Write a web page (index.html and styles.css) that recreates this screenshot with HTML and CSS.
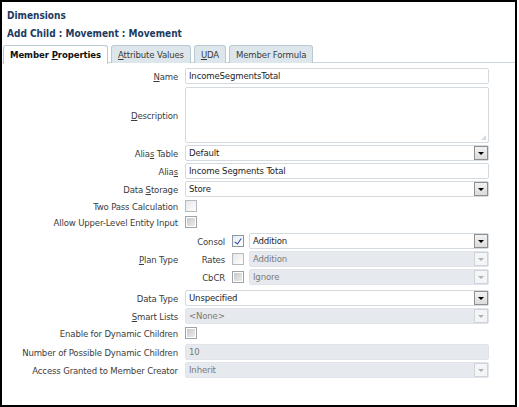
FILE: index.html
```html
<!DOCTYPE html>
<html>
<head>
<meta charset="utf-8">
<link rel="stylesheet" href="styles.css">
</head>
<body>
<div class="frame">
  <div class="hdr">
    <div class="title">Dimensions</div>
    <div class="title sub">Add Child : Movement : Movement</div>
  </div>
  <div class="tabs">
    <div class="tab active">Member <u>P</u>roperties</div>
    <div class="tab"><u>A</u>ttribute Values</div>
    <div class="tab"><u>U</u>DA</div>
    <div class="tab">Member Formula</div>
  </div>
  <div class="form">
    <div class="row t">
      <div class="lbl"><u>N</u>ame</div>
      <div class="ctl"><div class="inp">IncomeSegmentsTotal</div></div>
    </div>
    <div class="row desc">
      <div class="lbl"><u>D</u>escription</div>
      <div class="ctl"><div class="inp area"><span class="grip"></span></div></div>
    </div>
    <div class="row t">
      <div class="lbl">Alia<u>s</u> Table</div>
      <div class="ctl"><div class="inp sel">Default<span class="btn"></span></div></div>
    </div>
    <div class="row t">
      <div class="lbl">Alia<u>s</u></div>
      <div class="ctl"><div class="inp">Income Segments Total</div></div>
    </div>
    <div class="row t">
      <div class="lbl">Data <u>S</u>torage</div>
      <div class="ctl"><div class="inp sel">Store<span class="btn"></span></div></div>
    </div>
    <div class="row c">
      <div class="lbl">Two Pass Calculation</div>
      <div class="ctl"><span class="cb"></span></div>
    </div>
    <div class="row c">
      <div class="lbl">Allow Upper-Level Entity Input</div>
      <div class="ctl"><span class="cb dis"></span></div>
    </div>
    <div class="plan">
      <div class="lbl"><u>P</u>lan Type</div>
      <div class="ctl subrows">
        <div class="subrow">
          <div class="slbl">Consol</div>
          <span class="cb on"></span>
          <div class="inp sel">Addition<span class="btn"></span></div>
        </div>
        <div class="subrow">
          <div class="slbl">Rates</div>
          <span class="cb"></span>
          <div class="inp sel off">Addition<span class="btn"></span></div>
        </div>
        <div class="subrow">
          <div class="slbl">CbCR</div>
          <span class="cb dis"></span>
          <div class="inp sel off">Ignore<span class="btn"></span></div>
        </div>
      </div>
    </div>
    <div class="row t">
      <div class="lbl">Data Type</div>
      <div class="ctl"><div class="inp sel">Unspecified<span class="btn"></span></div></div>
    </div>
    <div class="row t">
      <div class="lbl"><u>S</u>mart Lists</div>
      <div class="ctl"><div class="inp sel off">&lt;None&gt;<span class="btn"></span></div></div>
    </div>
    <div class="row c en">
      <div class="lbl">Enable for Dynamic Children</div>
      <div class="ctl"><span class="cb dis"></span></div>
    </div>
    <div class="row t">
      <div class="lbl">Number of Possible Dynamic Children</div>
      <div class="ctl"><div class="inp off">10</div></div>
    </div>
    <div class="row t">
      <div class="lbl">Access Granted to Member Creator</div>
      <div class="ctl"><div class="inp sel off">Inherit<span class="btn"></span></div></div>
    </div>
  </div>
</div>
</body>
</html>
```

FILE: styles.css
```css
* { box-sizing: border-box; }
html, body { margin: 0; padding: 0; background: #fff; }
body {
  font-family: "DejaVu Sans Condensed", "DejaVu Sans", sans-serif;
  font-stretch: condensed;
  font-size: 9.5px;
  letter-spacing: -0.15px;
  color: #333;
}
.frame {
  width: 517px;
  height: 407px;
  border: 2px solid #000;
  background: #fff;
}
.hdr { padding: 7px 0 0 5px; }
.title {
  font-weight: bold;
  color: #1d3a62;
  line-height: 14px;
  height: 14px;
  font-size: 10px;
  letter-spacing: 0;
}
.title.sub { margin-top: 4px; }
.tabs {
  display: flex;
  gap: 3px;
  margin-top: 4px;
  padding-left: 1px;
  border-bottom: 1px solid #c9d6dc;
  height: 18px;
}
.tab {
  height: 18px;
  padding: 0 6px;
  line-height: 17px;
  border: 1px solid #b9c9d1;
  border-bottom: none;
  border-radius: 3px 3px 0 0;
  background: #dde7eb;
  color: #3a3a3a;
}
.tab.active {
  background: #fff;
  font-weight: bold;
  color: #111;
  height: 19px;
  padding: 0 6px;
  letter-spacing: -0.1px;
}
.form {
  padding: 5px 26px 0 0;
  display: flex;
  flex-direction: column;
}
.row { display: flex; align-items: center; margin-bottom: 2px; }
.row.t { height: 16px; }
.row.c { height: 14px; }
.row.desc { height: 56px; margin-top: 1px; }
.row.en { margin-bottom: 4px; }
.lbl {
  width: 177px;
  flex: none;
  text-align: right;
  padding-right: 1px;
  color: #3c3c3c;
  white-space: nowrap;
}
.ctl { margin-left: 6px; flex: 1; display: flex; align-items: center; height: 100%; }
.inp {
  position: relative;
  flex: 1;
  height: 100%;
  border: 1px solid #d3dae0;
  border-radius: 2px;
  background: #fff;
  color: #1e1e1e;
  padding-left: 3px;
  line-height: 14px;
  white-space: nowrap;
}
.inp.off { background: #e6e9ee; border-color: #e0e4ea; color: #7a7a7a; }
.inp.area { height: 56px; }
.grip {
  position: absolute; right: 2px; bottom: 2px;
  width: 5px; height: 5px;
  background:
    radial-gradient(circle, #aaa 0.6px, transparent 0.8px) 0 0 / 2px 2px;
  clip-path: polygon(100% 0, 100% 100%, 0 100%);
}
.btn {
  position: absolute;
  right: 0; top: 0;
  width: 14px; height: 14px;
  border: 1px solid #8f8f8f;
  background: linear-gradient(#f2f2f2, #dcdcdc);
}
.btn::after {
  content: "";
  position: absolute;
  left: 3px; top: 5px;
  border-left: 3px solid transparent;
  border-right: 3px solid transparent;
  border-top: 3px solid #000;
}
.inp.off .btn { border-color: #d0d4da; background: #f4f5f7; }
.inp.off .btn::after { border-top-color: #b0b0b0; }
.cb {
  display: inline-block;
  width: 12px; height: 12px;
  border: 1px solid #b4bac0;
  background: linear-gradient(135deg, #e6e6e6, #fff);
  position: relative;
  flex: none;
}
.cb.dis {
  border-color: #9ea3a8;
  background: #fff;
}
.cb.dis::before {
  content: ""; position: absolute; left: 1px; top: 1px; right: 1px; bottom: 1px;
  background: linear-gradient(135deg, #c9c9c9, #ececec);
}
.cb.on { border-color: #8a96a6; background: linear-gradient(135deg, #e8ecf0, #fff); }
.cb.on::after {
  content: "";
  position: absolute;
  left: 3px; top: 1px;
  width: 3px; height: 6px;
  border-right: 1.5px solid #2b3fa0;
  border-bottom: 1.5px solid #2b3fa0;
  transform: rotate(35deg);
}
.plan { display: flex; align-items: center; margin-top: 2px; margin-bottom: 5px; }
.subrows { flex-direction: column; align-items: stretch; gap: 2px; height: auto; }
.subrow { display: flex; align-items: center; height: 16px; }
.slbl { width: 40px; text-align: right; color: #3c3c3c; flex: none; }
.subrow .cb { margin-left: 7px; margin-right: 5px; }
.subrow .inp { flex: 1; }
u { text-decoration: underline; text-underline-offset: 1px; }
```
